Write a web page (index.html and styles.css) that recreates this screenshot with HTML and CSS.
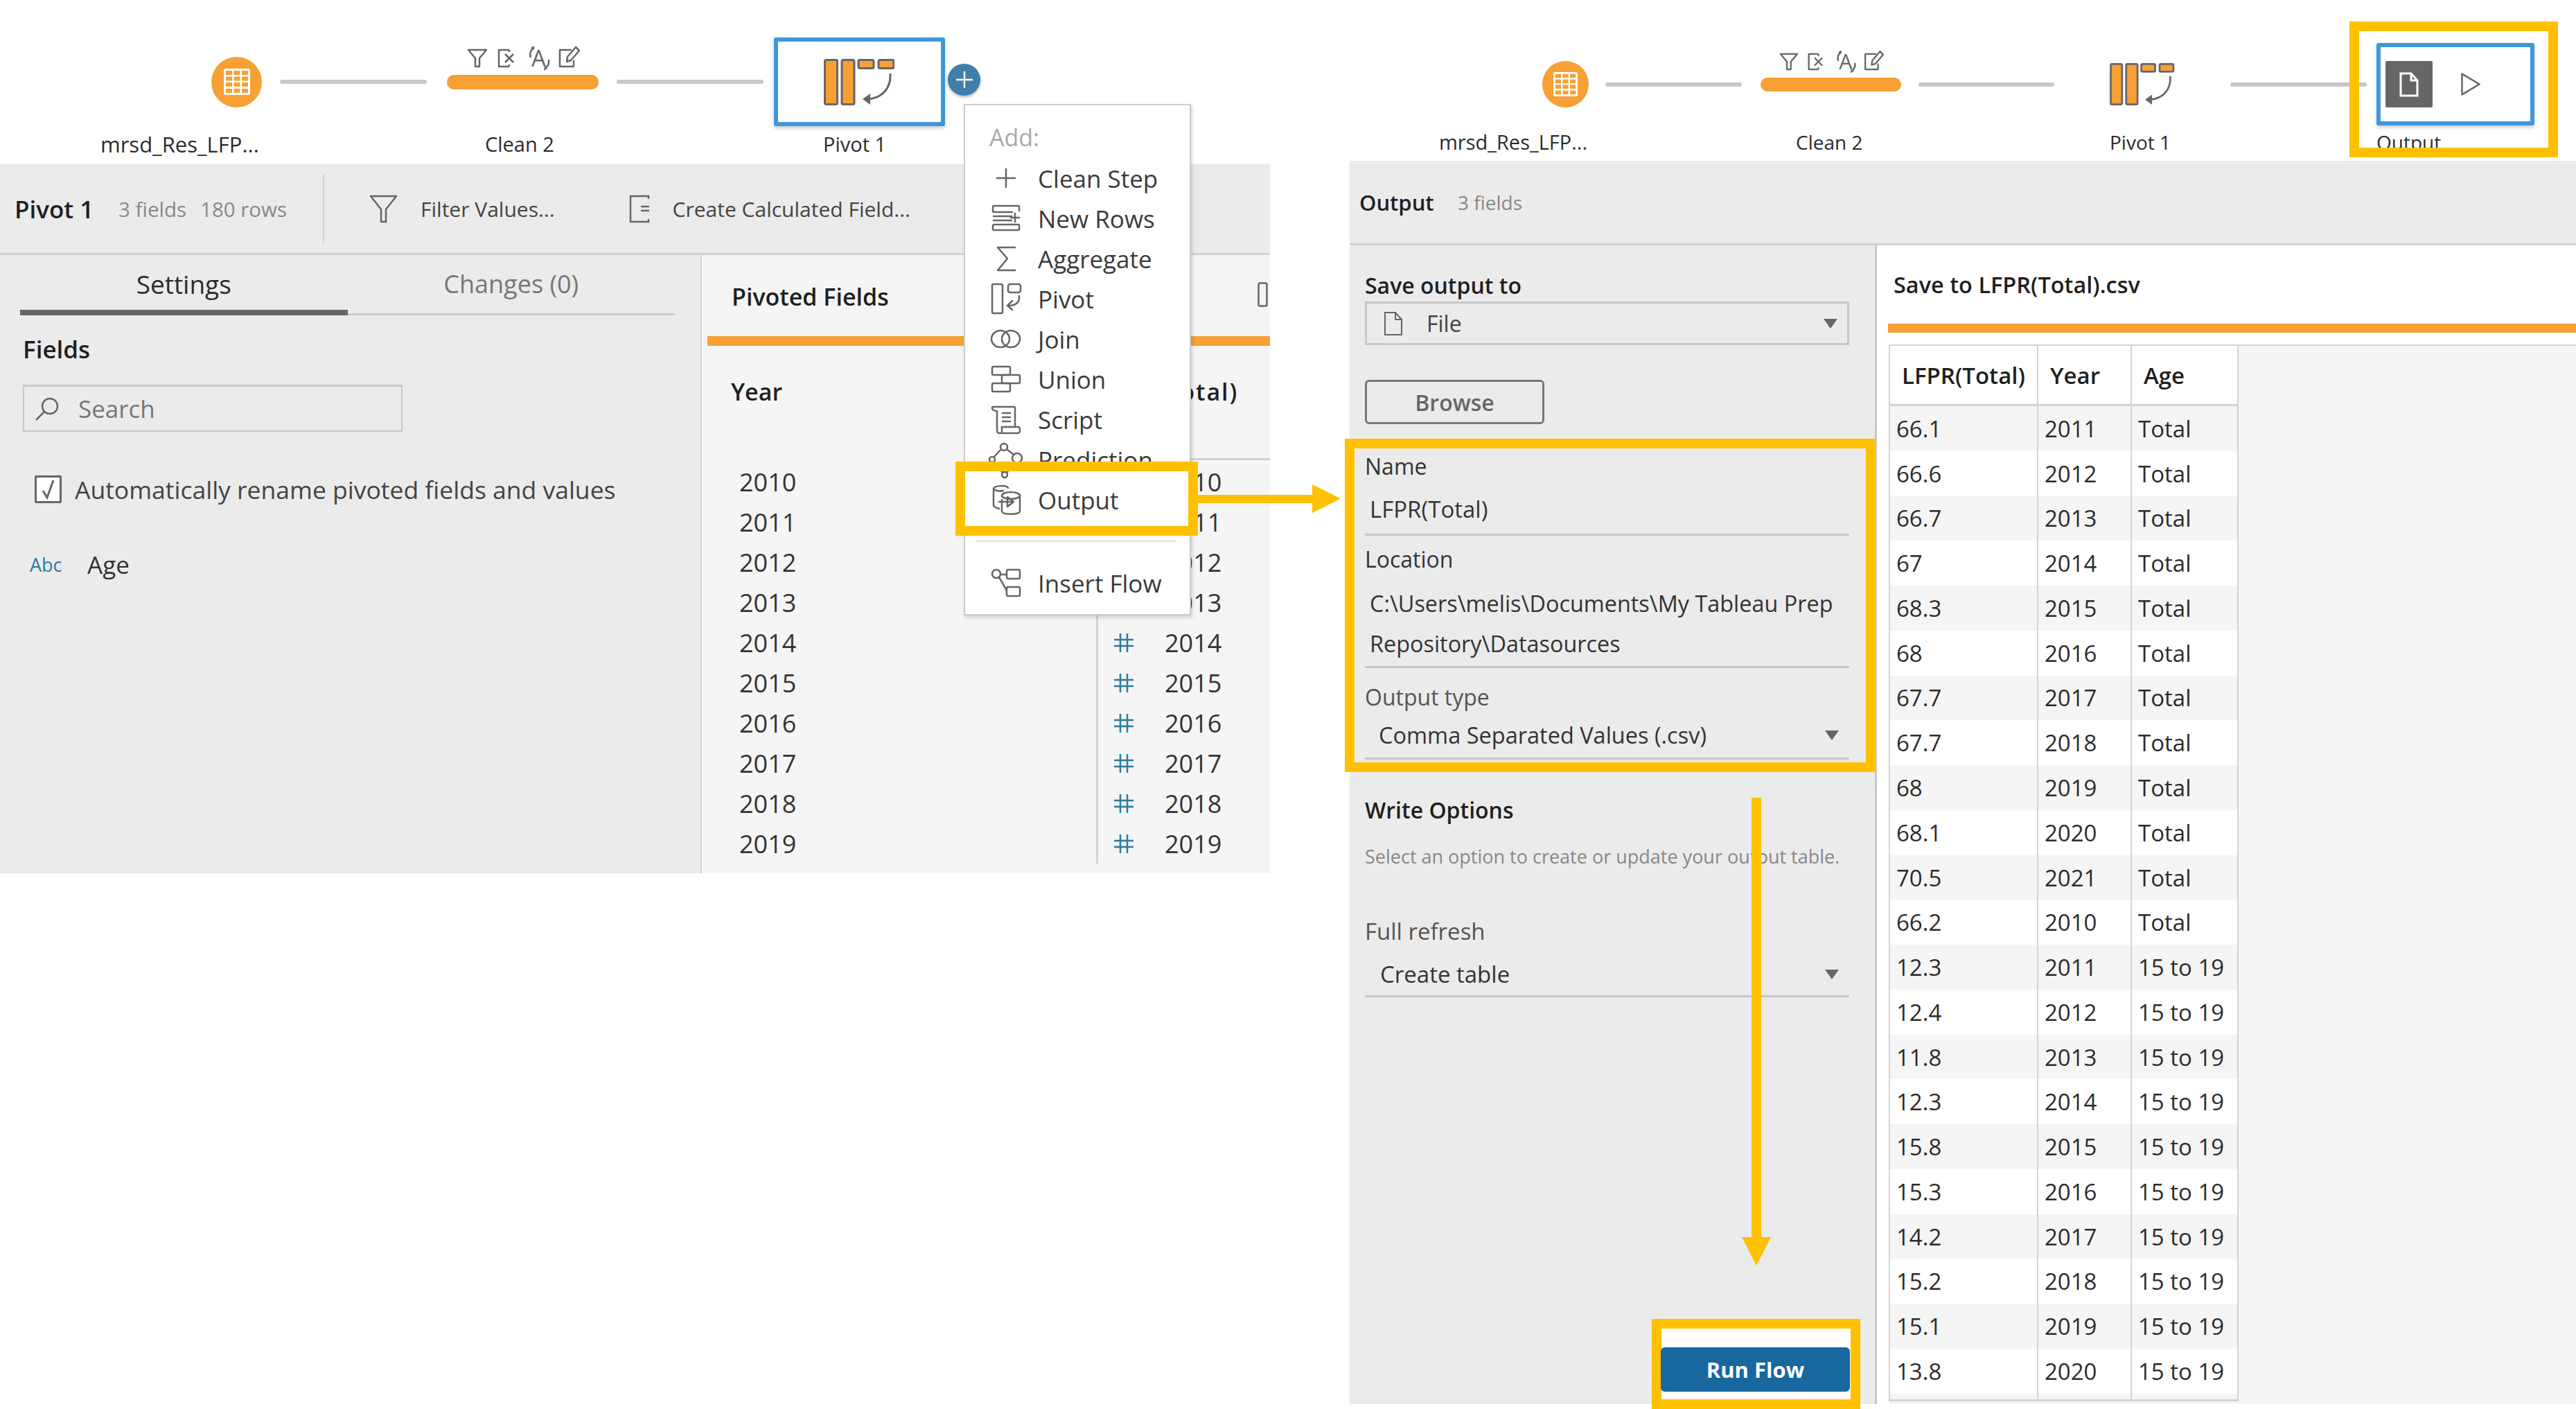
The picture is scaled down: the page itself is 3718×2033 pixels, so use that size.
FILE: index.html
```html
<!DOCTYPE html>
<html lang="en">
<head>
    <meta charset="UTF-8">
    <title>Tableau Prep output steps</title>
    <link rel="stylesheet" href="styles.css">
</head>
<body>
    <svg class="sprite">
        <symbol id="i-grid" viewBox="0 0 38 38">
            <rect width="38" height="38" rx="3" fill="#fff"/>
            <g fill="#f7a035">
                <rect x="3" y="3" width="9" height="6"/><rect x="14.5" y="3" width="9" height="6"/><rect x="26" y="3" width="9" height="6"/>
                <rect x="3" y="11.5" width="9" height="6"/><rect x="14.5" y="11.5" width="9" height="6"/><rect x="26" y="11.5" width="9" height="6"/>
                <rect x="3" y="20" width="9" height="6"/><rect x="14.5" y="20" width="9" height="6"/><rect x="26" y="20" width="9" height="6"/>
                <rect x="3" y="29" width="9" height="6"/><rect x="14.5" y="29" width="9" height="6"/><rect x="26" y="29" width="9" height="6"/>
            </g>
        </symbol>
        <symbol id="i-clean-marks" viewBox="0 0 162 36">
            <g fill="none" stroke="#666" stroke-width="2.5" stroke-linejoin="round">
                <path d="M1 6h26L17 18v12h-6V18z"/>
                <path d="M60 6H45v24h15M60 6v3M60 27v3"/>
                <path d="M54 12l12 12M66 12L54 24"/>
                <path d="M91 17c-2-6 0-11 5-14M117 20c1 6-1 10-6 13"/>
                <path d="M150 6h-17v24h20v-9"/>
                <path d="M143 23l1-7L156 2l5 5-12 14z"/>
            </g>
            <path d="M96 0l-1 6-4-3zM110 36l1-6 4 3z" fill="#666"/>
        </symbol>
        <symbol id="i-pivot" viewBox="0 0 102 67">
            <g fill="#f7a035" stroke="#666" stroke-width="3">
                <rect x="1.5" y="1.5" width="18" height="64" rx="2"/>
                <rect x="26" y="1.5" width="18" height="64" rx="2"/>
                <rect x="50" y="1.5" width="22" height="12" rx="2"/>
                <rect x="79" y="1.5" width="22" height="12" rx="2"/>
            </g>
            <path d="M96 21c1 20-10 35-32 37" fill="none" stroke="#666" stroke-width="3"/>
            <path d="M56 58l11-8v16z" fill="#666"/>
        </symbol>
        <symbol id="i-hash" viewBox="0 0 29 29">
            <path d="M10 1v27M20 1v27M1 10h28M1 19h28" stroke="#2d7a9e" stroke-width="2.5" fill="none"/>
        </symbol>
    </svg>

    <div class="page">
        <div class="screen screen-left">
            <div class="flow flow-left">
                <div class="track">
                    <div class="node-input"><svg class="grid-ico"><use href="#i-grid"/></svg></div>
                    <div class="link link-a"></div>
                    <div class="node-clean">
                        <svg class="clean-ico" viewBox="0 0 162 36"><use href="#i-clean-marks"/><text x="92" y="30" class="icon-letter">A</text></svg>
                    </div>
                    <div class="link link-b"></div>
                    <div class="node-box node-pivot">
                        <svg class="pivot-ico"><use href="#i-pivot"/></svg>
                    </div>
                    <div class="add-btn">
                        <svg width="26" height="26" viewBox="0 0 26 26"><path d="M13 1v24M1 13h24" stroke="#fff" stroke-width="2.5"/></svg>
                    </div>
                </div>
                <div class="labels">
                    <span class="lbl lbl-a">mrsd_Res_LFP...</span>
                    <span class="lbl lbl-b">Clean 2</span>
                    <span class="lbl lbl-c">Pivot 1</span>
                </div>
            </div>

            <div class="panel panel-left">
                <div class="panel-head">
                    <strong class="step-name">Pivot 1</strong>
                    <span class="step-meta">3 fields</span>
                    <span class="step-meta meta-rows">180 rows</span>
                    <div class="head-sep"></div>
                    <svg class="head-ico" width="41" height="41" viewBox="0 0 41 41"><path d="M2 2h37L24 21v18h-7V21z" fill="none" stroke="#666" stroke-width="2.5" stroke-linejoin="round"/></svg>
                    <span class="head-action">Filter Values...</span>
                    <svg class="head-ico ico-calc" width="30" height="41" viewBox="0 0 30 41"><path d="M28 6V2H2v37h26v-4M17 17h12M17 23h12" fill="none" stroke="#666" stroke-width="2.5"/></svg>
                    <span class="head-action">Create Calculated Field...</span>
                </div>
                <div class="panel-body">
                    <div class="settings">
                        <div class="tabs">
                            <div class="tab tab-on">Settings</div>
                            <div class="tab">Changes (0)</div>
                        </div>
                        <div class="fields-title">Fields</div>
                        <div class="search">
                            <svg width="35" height="34" viewBox="0 0 35 34"><circle cx="22" cy="13" r="11" fill="none" stroke="#666" stroke-width="2.5"/><path d="M14 21L2 33" stroke="#666" stroke-width="2.5"/></svg>
                            <span>Search</span>
                        </div>
                        <div class="check-row">
                            <div class="checkbox"><svg width="26" height="30" viewBox="0 0 26 30"><path d="M5 17l6 10L20 2" fill="none" stroke="#666" stroke-width="3"/></svg></div>
                            <span>Automatically rename pivoted fields and values</span>
                        </div>
                        <div class="field-row">
                            <span class="abc">Abc</span>
                            <span>Age</span>
                        </div>
                    </div>

                    <div class="pivoted">
                        <div class="pivoted-title">Pivoted Fields
                            <svg class="col-ico" width="15" height="36" viewBox="0 0 15 36"><rect x="1.5" y="1.5" width="12" height="33" rx="2" fill="none" stroke="#666" stroke-width="2.5"/></svg>
                        </div>
                        <div class="orange-bar"></div>
                        <div class="pivot-cols">
                            <div class="pivot-col col-year">
                                <div class="col-head">Year</div>
                                <ul class="year-list">
                                    <li>2010</li><li>2011</li><li>2012</li><li>2013</li><li>2014</li>
                                    <li>2015</li><li>2016</li><li>2017</li><li>2018</li><li>2019</li>
                                </ul>
                            </div>
                            <div class="pivot-col col-value">
                                <div class="col-head">LFPR(Total)</div>
                                <ul class="year-list num-list">
                                    <li><svg class="hash"><use href="#i-hash"/></svg>2010</li>
                                    <li><svg class="hash"><use href="#i-hash"/></svg>2011</li>
                                    <li><svg class="hash"><use href="#i-hash"/></svg>2012</li>
                                    <li><svg class="hash"><use href="#i-hash"/></svg>2013</li>
                                    <li><svg class="hash"><use href="#i-hash"/></svg>2014</li>
                                    <li><svg class="hash"><use href="#i-hash"/></svg>2015</li>
                                    <li><svg class="hash"><use href="#i-hash"/></svg>2016</li>
                                    <li><svg class="hash"><use href="#i-hash"/></svg>2017</li>
                                    <li><svg class="hash"><use href="#i-hash"/></svg>2018</li>
                                    <li><svg class="hash"><use href="#i-hash"/></svg>2019</li>
                                </ul>
                            </div>
                        </div>
                    </div>
                </div>
            </div>
        </div>

        <div class="screen screen-right">
            <div class="flow flow-right">
                <div class="track track-r">
                    <div class="node-input input-r"><svg class="grid-ico"><use href="#i-grid"/></svg></div>
                    <div class="link link-r1"></div>
                    <div class="node-clean clean-r">
                        <svg class="clean-ico" viewBox="0 0 162 36"><use href="#i-clean-marks"/><text x="92" y="30" class="icon-letter">A</text></svg>
                    </div>
                    <div class="link link-r2"></div>
                    <svg class="pivot-ico pivot-plain"><use href="#i-pivot"/></svg>
                    <div class="link link-r3"></div>
                    <div class="node-box node-output">
                        <div class="out-square">
                            <svg width="28" height="36" viewBox="0 0 28 36"><path d="M2 2h15l9 10v22H2zM17 2v10h9" fill="none" stroke="#fff" stroke-width="3"/></svg>
                        </div>
                        <svg class="play" width="28" height="33" viewBox="0 0 28 33"><path d="M1.5 1.5v30l25-15z" fill="none" stroke="#666" stroke-width="2.5" stroke-linejoin="round"/></svg>
                    </div>
                </div>
                <div class="labels labels-r">
                    <span class="lbl lbl-r1">mrsd_Res_LFP...</span>
                    <span class="lbl lbl-r2">Clean 2</span>
                    <span class="lbl lbl-r3">Pivot 1</span>
                    <span class="lbl lbl-r4">Output</span>
                </div>
            </div>

            <div class="panel panel-right">
                <div class="panel-head head-r">
                    <strong class="step-name">Output</strong>
                    <span class="step-meta">3 fields</span>
                </div>
                <div class="panel-body body-r">
                    <div class="options">
                        <div class="opt-title first">Save output to</div>
                        <div class="select-box">
                            <svg width="26" height="34" viewBox="0 0 26 34"><path d="M1 1h15l9 10v22H1zM16 1v10h9" fill="none" stroke="#666" stroke-width="2"/></svg>
                            <span>File</span>
                            <i class="caret"></i>
                        </div>
                        <button class="browse">Browse</button>

                        <div class="opt-label lbl-name">Name</div>
                        <div class="opt-value val-name">LFPR(Total)</div>
                        <div class="opt-label lbl-loc">Location</div>
                        <div class="opt-value val-loc">C:\Users\melis\Documents\My Tableau Prep Repository\Datasources</div>
                        <div class="opt-label muted lbl-type">Output type</div>
                        <div class="opt-value val-type">Comma Separated Values (.csv)<i class="caret"></i></div>

                        <div class="opt-title write-title">Write Options</div>
                        <div class="opt-hint">Select an option to create or update your output table.</div>
                        <div class="opt-label muted lbl-refresh">Full refresh</div>
                        <div class="opt-value val-refresh">Create table<i class="caret"></i></div>

                        <button class="run-btn">Run Flow</button>
                    </div>

                    <div class="preview">
                        <div class="preview-title">Save to LFPR(Total).csv</div>
                        <div class="orange-bar bar-r"></div>
                        <div class="table-area">
                            <table class="data-table">
                                <thead>
                                    <tr><th>LFPR(Total)</th><th>Year</th><th>Age</th></tr>
                                </thead>
                                <tbody>
                                    <tr><td>66.1</td><td>2011</td><td>Total</td></tr>
                                    <tr><td>66.6</td><td>2012</td><td>Total</td></tr>
                                    <tr><td>66.7</td><td>2013</td><td>Total</td></tr>
                                    <tr><td>67</td><td>2014</td><td>Total</td></tr>
                                    <tr><td>68.3</td><td>2015</td><td>Total</td></tr>
                                    <tr><td>68</td><td>2016</td><td>Total</td></tr>
                                    <tr><td>67.7</td><td>2017</td><td>Total</td></tr>
                                    <tr><td>67.7</td><td>2018</td><td>Total</td></tr>
                                    <tr><td>68</td><td>2019</td><td>Total</td></tr>
                                    <tr><td>68.1</td><td>2020</td><td>Total</td></tr>
                                    <tr><td>70.5</td><td>2021</td><td>Total</td></tr>
                                    <tr><td>66.2</td><td>2010</td><td>Total</td></tr>
                                    <tr><td>12.3</td><td>2011</td><td>15 to 19</td></tr>
                                    <tr><td>12.4</td><td>2012</td><td>15 to 19</td></tr>
                                    <tr><td>11.8</td><td>2013</td><td>15 to 19</td></tr>
                                    <tr><td>12.3</td><td>2014</td><td>15 to 19</td></tr>
                                    <tr><td>15.8</td><td>2015</td><td>15 to 19</td></tr>
                                    <tr><td>15.3</td><td>2016</td><td>15 to 19</td></tr>
                                    <tr><td>14.2</td><td>2017</td><td>15 to 19</td></tr>
                                    <tr><td>15.2</td><td>2018</td><td>15 to 19</td></tr>
                                    <tr><td>15.1</td><td>2019</td><td>15 to 19</td></tr>
                                    <tr><td>13.8</td><td>2020</td><td>15 to 19</td></tr>
                                    <tr class="tail"><td></td><td></td><td></td></tr>
                                </tbody>
                            </table>
                        </div>
                    </div>
                </div>
            </div>
        </div>

        <!-- add step menu, sits over the pivot panel -->
        <div class="add-menu">
            <div class="menu-title">Add:</div>
            <div class="menu-item">
                <svg class="menu-ico" viewBox="0 0 48 48"><path d="M11 24h26M24 11v26"/></svg>Clean Step
            </div>
            <div class="menu-item">
                <svg class="menu-ico" viewBox="0 0 48 48"><path d="M43 13V7a1 1 0 0 0-1-1H7a2 2 0 0 0-2 2v5a2 2 0 0 0 2 2h26M6 21h26M6 27h26M7 33h35a1 1 0 0 1 1 1v6a1 1 0 0 1-1 1H7a2 2 0 0 1-2-2v-4a2 2 0 0 1 2-2M37 17v12M31 23h12"/></svg>New Rows
            </div>
            <div class="menu-item">
                <svg class="menu-ico" viewBox="0 0 48 48"><path d="M37 8H12l14 16-14 17h25"/></svg>Aggregate
            </div>
            <div class="menu-item">
                <svg class="menu-ico" viewBox="0 0 48 48"><rect x="4" y="3" width="15" height="42" rx="2"/><rect x="27" y="3" width="18" height="12" rx="3"/><path d="M43 20c1 10-6 14-15 14M33 27l-7 7 7 6"/></svg>Pivot
            </div>
            <div class="menu-item">
                <svg class="menu-ico" viewBox="0 0 48 48"><ellipse cx="16" cy="24" rx="13" ry="12"/><ellipse cx="31" cy="24" rx="13" ry="12"/></svg>Join
            </div>
            <div class="menu-item">
                <svg class="menu-ico" viewBox="0 0 48 48"><rect x="4" y="6" width="26" height="12" rx="2"/><rect x="18" y="18" width="26" height="12" rx="2"/><rect x="4" y="30" width="26" height="12" rx="2"/></svg>Union
            </div>
            <div class="menu-item">
                <svg class="menu-ico" viewBox="0 0 48 48"><path d="M5 6h30a2 2 0 0 1 2 2v26M5 6c-2 0-2 6 6 6v28c0 3 2 4 4 4h26c4 0 4-9 0-9H18v9M19 15h11M19 21h11M19 27h11"/></svg>Script
            </div>
            <div class="menu-item">
                <svg class="menu-ico" viewBox="0 0 48 48"><circle cx="21" cy="6" r="5"/><circle cx="4" cy="24" r="4"/><circle cx="40" cy="22" r="7"/><circle cx="22" cy="46" r="4"/><path d="M17 9L7 20M25 9l10 8M7 27l12 16M36 28L25 43"/></svg>Prediction
            </div>
            <div class="menu-item">
                <svg class="menu-ico" viewBox="0 0 48 48"><path d="M27 7C25 3 8 3 6 8v24c0 3 5 4 8 5M6 8c2 3 8 4 14 3"/><ellipse cx="31" cy="18" rx="13" ry="5"/><path d="M18 24v17c1 5 24 5 26 0V18M14 27h18M26 20l9 7-9 7z"/></svg>Output
            </div>
            <div class="menu-sep"></div>
            <div class="menu-item">
                <svg class="menu-ico" viewBox="0 0 48 48"><circle cx="10" cy="11" r="6"/><rect x="25" y="5" width="19" height="13" rx="2"/><rect x="25" y="30" width="19" height="13" rx="2"/><path d="M16 12h9M14 16l11 19"/></svg>Insert Flow
            </div>
        </div>

        <!-- yellow call-outs drawn on top of the screenshots -->
        <div class="callout call-menu"></div>
        <div class="callout call-form"></div>
        <div class="callout call-node"></div>
        <div class="callout call-run"></div>
        <svg class="arrow arrow-h" width="206" height="41" viewBox="0 0 206 41"><path d="M0 15h165V0l41 20.5L165 41V27H0z" fill="#ffc000"/></svg>
        <svg class="arrow arrow-v" width="42" height="675" viewBox="0 0 42 675"><path d="M14 0h14v634h14l-21 41-21-41h14z" fill="#ffc000"/></svg>
    </div>
</body>
</html>
```

FILE: styles.css
```css
* {
    box-sizing: border-box;
}
html, body {
    margin: 0;
    padding: 0;
    background: #fff;
}
body {
    font-family: "Open Sans", "Noto Sans", sans-serif;
    font-size: 35px;
    color: #333;
}
.sprite {
    position: absolute;
    width: 0;
    height: 0;
}
.icon-letter {
    font-family: "Open Sans", sans-serif;
    font-size: 33px;
    fill: #666;
}
.page {
    position: relative;
    display: flex;
    width: 3718px;
    height: 2033px;
    overflow: hidden;
}
.screen-left {
    width: 1833px;
}
.screen-right {
    width: 1770px;
    margin-left: 115px;
}

/* flow canvas */
.flow-left {
    height: 237px;
    padding-top: 54px;
}
.flow-right {
    height: 232px;
    padding-top: 62px;
}
.track {
    display: flex;
    align-items: center;
    height: 128px;
}
.track-r {
    height: 119px;
}
.node-input {
    display: flex;
    align-items: center;
    justify-content: center;
    width: 73px;
    height: 73px;
    margin-left: 305px;
    border-radius: 50%;
    background: #f7a035;
}
.grid-ico {
    width: 38px;
    height: 38px;
}
.input-r {
    width: 67px;
    height: 67px;
    margin-left: 278px;
}
.input-r .grid-ico {
    width: 35px;
    height: 35px;
}
.link {
    height: 6px;
    border-radius: 3px;
    background: #c8c8c8;
}
.link-a { width: 212px; margin-left: 26px; }
.link-b { width: 212px; margin-left: 26px; }
.link-r1 { width: 197px; margin-left: 24px; }
.link-r2 { width: 196px; margin-left: 25px; }
.link-r3 { width: 197px; margin-left: 80px; }
.node-clean {
    position: relative;
    width: 219px;
    height: 21px;
    margin-left: 29px;
    border-radius: 10px;
    background: #f7a035;
}
.clean-r {
    width: 203px;
    height: 20px;
    margin-left: 27px;
}
.clean-ico {
    position: absolute;
    left: 30px;
    top: -42px;
    width: 162px;
    height: 36px;
    overflow: visible;
}
.clean-r .clean-ico {
    left: 28px;
    top: -40px;
    width: 150px;
    height: 34px;
}
.node-box {
    display: flex;
    align-items: center;
    border: 6px solid #3d98dc;
    border-radius: 3px;
    background: #fff;
    box-shadow: 0 3px 5px rgba(0,0,0,0.2);
}
.node-pivot {
    justify-content: center;
    width: 247px;
    height: 128px;
    margin-left: 15px;
    padding-right: 1px;
}
.pivot-ico {
    width: 102px;
    height: 67px;
}
.pivot-plain {
    width: 95px;
    height: 61px;
    margin-left: 79px;
}
.add-btn {
    display: flex;
    align-items: center;
    justify-content: center;
    width: 47px;
    height: 46px;
    margin: -6px 0 0 4px;
    border-radius: 50%;
    background: #3f7fa8;
    box-shadow: 0 2px 4px rgba(0,0,0,0.3);
}
.node-output {
    width: 228px;
    height: 119px;
    margin-left: 14px;
    padding-left: 7px;
}
.out-square {
    display: flex;
    align-items: center;
    justify-content: center;
    width: 68px;
    height: 67px;
    border-radius: 2px;
    background: #666;
}
.play {
    margin-left: 41px;
}
.labels {
    display: flex;
    margin-top: 8px;
    line-height: 36px;
    font-size: 29px;
    color: #2b2b2b;
    white-space: nowrap;
}
.labels-r {
    margin-top: 6px;
    font-size: 28px;
}
.lbl {
    display: block;
}
.lbl-a { width: 226px; margin-left: 145px; font-size: 31px; }
.lbl-b { width: 97px; margin-left: 329px; }
.lbl-c { width: 94px; margin-left: 391px; }
.lbl-r1 { width: 210px; margin-left: 129px; font-size: 29px; }
.lbl-r2 { width: 91px; margin-left: 305px; }
.lbl-r3 { width: 87px; margin-left: 362px; }
.lbl-r4 { width: 90px; margin-left: 298px; }

/* panels */
.panel {
    background: #ebebeb;
}
.panel-left {
    height: 1023px;
}
.panel-right {
    display: flex;
    flex-direction: column;
    height: 1794px;
}
.panel-head {
    display: flex;
    align-items: center;
    height: 131px;
    padding-left: 21px;
    border-bottom: 3px solid #d2d2d2;
    white-space: nowrap;
}
.head-r {
    height: 122px;
    padding-left: 14px;
}
.step-name {
    width: 150px;
    font-size: 35px;
    font-weight: 600;
    color: #1f1f1f;
}
.head-r .step-name {
    width: 142px;
    font-size: 31px;
}
.step-meta {
    font-size: 29.5px;
    color: #888;
}
.head-r .step-meta {
    font-size: 28px;
}
.meta-rows {
    margin-left: 20px;
}
.head-sep {
    width: 2px;
    height: 99px;
    margin-left: 52px;
    background: #d2d2d2;
}
.head-ico {
    margin-left: 65px;
}
.head-action {
    margin-left: 33px;
    font-size: 30px;
    color: #444;
}
.ico-calc {
    margin-left: 107px;
}
.panel-body {
    display: flex;
    height: 892px;
}
.body-r {
    flex: 1;
    height: auto;
    min-height: 0;
}

/* pivot settings column */
.settings {
    flex: none;
    width: 1011px;
    padding-left: 29px;
}
.tabs {
    display: flex;
    width: 945px;
}
.tab {
    width: 50%;
    height: 87px;
    padding-top: 22px;
    line-height: 40px;
    text-align: center;
    border-bottom: 3px solid #ccc;
    font-size: 36px;
    color: #777;
}
.tab-on {
    border-bottom: 8px solid #666;
    font-size: 37px;
    color: #2b2b2b;
}
.fields-title {
    margin: 29px 0 0 4px;
    line-height: 40px;
    font-size: 35px;
    font-weight: 600;
    color: #1f1f1f;
}
.search {
    display: flex;
    align-items: center;
    gap: 28px;
    width: 548px;
    height: 68px;
    margin: 31px 0 0 4px;
    padding-left: 15px;
    border: 2px solid #c8c8c8;
    border-top-width: 3px;
    color: #777;
}
.check-row {
    display: flex;
    align-items: center;
    gap: 19px;
    height: 40px;
    margin: 63px 0 0 21px;
    font-size: 35.5px;
    color: #444;
}
.checkbox {
    display: flex;
    align-items: center;
    justify-content: center;
    width: 39px;
    height: 40px;
    border: 3px solid #666;
    border-radius: 2px;
    background: #fff;
}
.field-row {
    display: flex;
    align-items: center;
    height: 40px;
    margin: 68px 0 0 14px;
    color: #333;
}
.abc {
    width: 83px;
    font-size: 27px;
    color: #2d7a9e;
}

/* pivoted fields */
.pivoted {
    flex: 1;
    min-width: 0;
    border-left: 2px solid #d2d2d2;
    background: #f5f5f5;
}
.pivoted-title {
    position: relative;
    height: 117px;
    padding: 40px 0 0 43px;
    line-height: 40px;
    font-size: 34px;
    font-weight: 600;
    color: #1f1f1f;
}
.col-ico {
    position: absolute;
    right: 3px;
    top: 39px;
}
.orange-bar {
    height: 14px;
    margin-left: 8px;
    background: #f7a035;
}
.pivot-cols {
    display: flex;
}
.col-year {
    width: 569px;
}
.col-value {
    flex: 1;
    min-width: 0;
}
.col-head {
    height: 165px;
    padding: 46px 0 0 42px;
    line-height: 40px;
    font-size: 34px;
    font-weight: 600;
    color: #1f1f1f;
}
.col-value .col-head {
    padding: 46px 58px 0 0;
    border-bottom: 3px solid #d2d2d2;
    text-align: right;
    letter-spacing: 2px;
    white-space: nowrap;
}
.year-list {
    margin: 0;
    padding: 2px 0 0 54px;
    list-style: none;
}
.year-list li {
    display: flex;
    align-items: center;
    height: 58px;
    font-size: 36px;
    color: #333;
}
.num-list {
    padding-left: 22px;
    border-left: 3px solid #d2d2d2;
}
.hash {
    width: 29px;
    height: 29px;
    margin-right: 45px;
}

/* output options */
.options {
    display: flex;
    flex-direction: column;
    flex: none;
    width: 761px;
    padding: 38px 37px 18px 22px;
    border-right: 3px solid #c8c8c8;
    font-size: 32px;
}
.opt-title {
    line-height: 40px;
    font-weight: 600;
    color: #1f1f1f;
}
.select-box {
    display: flex;
    align-items: center;
    height: 63px;
    margin-top: 3px;
    padding: 0 14px 0 25px;
    border: 3px solid #c8c8c8;
    color: #444;
}
.select-box span {
    margin-left: 35px;
}
.caret {
    width: 0;
    height: 0;
    margin-left: auto;
    border-left: 10px solid transparent;
    border-right: 10px solid transparent;
    border-top: 14px solid #666;
}
.browse {
    width: 259px;
    height: 64px;
    margin-top: 50px;
    padding: 0;
    border: 3px solid #777;
    border-radius: 6px;
    background: #ebebeb;
    font-family: inherit;
    font-size: 32px;
    font-weight: 600;
    color: #666;
}
.opt-label {
    line-height: 40px;
    color: #333;
}
.opt-label.muted {
    color: #555;
}
.opt-value {
    display: flex;
    align-items: center;
    line-height: 40px;
    padding-left: 7px;
    border-bottom: 3px solid #c8c8c8;
    color: #333;
}
.lbl-name { margin-top: 41px; }
.val-name { margin-top: 22px; padding-bottom: 15px; font-size: 33px; }
.lbl-loc { margin-top: 14px; }
.val-loc {
    margin-top: 14px;
    padding-bottom: 4px;
    line-height: 58px;
    font-size: 32.4px;
}
.lbl-type { margin-top: 22px; }
.val-type {
    margin-top: 15px;
    padding: 0 15px 12px 20px;
    font-size: 32.5px;
}
.write-title { margin-top: 53px; }
.opt-hint {
    margin-top: 27px;
    line-height: 40px;
    font-size: 27px;
    color: #888;
    white-space: nowrap;
}
.lbl-refresh { margin-top: 68px; font-size: 33px; }
.val-refresh {
    margin-top: 22px;
    padding: 0 15px 10px 22px;
    font-size: 33px;
}
.run-btn {
    position: relative;
    z-index: 2;
    align-self: flex-end;
    width: 273px;
    height: 64px;
    margin: auto -1px 0 0;
    padding: 0;
    border: none;
    border-radius: 6px;
    background: #18679e;
    font-family: inherit;
    font-size: 31px;
    font-weight: 700;
    color: #fff;
}

/* output preview */
.preview {
    display: flex;
    flex-direction: column;
    flex: 1;
    min-width: 0;
    background: #fff;
}
.preview-title {
    margin: 37px 0 0 24px;
    line-height: 40px;
    font-size: 32.5px;
    font-weight: 600;
    color: #1f1f1f;
}
.bar-r {
    height: 13px;
    margin: 36px 0 0 16px;
}
.table-area {
    flex: 1;
    margin: 17px 0 0 17px;
    border-top: 2px solid #d4d4d4;
    background: #f5f5f5;
}
.data-table {
    display: block;
    width: 505px;
    border-left: 2px solid #d4d4d4;
    border-bottom: 3px solid #d4d4d4;
    background: #fff;
}
.data-table thead,
.data-table tbody {
    display: block;
}
.data-table tr {
    display: grid;
    grid-template-columns: 214px 135px 154px;
    height: 64.77px;
}
.data-table thead tr {
    height: 87px;
}
.data-table th,
.data-table td {
    display: flex;
    align-items: center;
    border-right: 2px solid #d4d4d4;
}
.data-table th {
    padding-left: 17px;
    border-bottom: 3px solid #d4d4d4;
    font-size: 33px;
    font-weight: 600;
    color: #1f1f1f;
}
.data-table td {
    padding-left: 9px;
    font-size: 33px;
    color: #2b2b2b;
}
.data-table tbody tr:nth-child(odd) td {
    background: #f5f5f5;
}
.data-table tr.tail {
    height: 8px;
}

/* add step menu */
.add-menu {
    position: absolute;
    left: 1391px;
    top: 150px;
    width: 328px;
    height: 738px;
    padding-top: 26px;
    border: 2px solid #ccc;
    background: #fff;
    box-shadow: 2px 3px 5px rgba(0,0,0,0.15);
}
.menu-title {
    height: 50px;
    padding-left: 35px;
    line-height: 40px;
    font-size: 34px;
    color: #aaa;
}
.menu-item {
    display: flex;
    align-items: center;
    height: 58px;
    padding-left: 35px;
    font-size: 35px;
    color: #3a3a3a;
    white-space: nowrap;
}
.menu-ico {
    flex: none;
    width: 48px;
    height: 48px;
    margin-right: 22px;
    overflow: visible;
    fill: none;
    stroke: #666;
    stroke-width: 2.5;
    stroke-linejoin: round;
    stroke-linecap: round;
}
.menu-sep {
    height: 3px;
    margin: 29px 19px 30px 16px;
    background: #e6e6e6;
}

/* call-outs */
.callout {
    position: absolute;
    border: 14px solid #ffc000;
}
.call-menu { left: 1379px; top: 666px; width: 350px; height: 107px; }
.call-form { left: 1941px; top: 633px; width: 766px; height: 481px; }
.call-node { left: 3391px; top: 31px; width: 301px; height: 196px; }
.call-run {
    left: 2384px;
    top: 1903px;
    width: 301px;
    height: 130px;
    z-index: 1;
    background: #fff;
}
.arrow {
    position: absolute;
}
.arrow-h { left: 1729px; top: 699px; }
.arrow-v { left: 2514px; top: 1151px; }
```
